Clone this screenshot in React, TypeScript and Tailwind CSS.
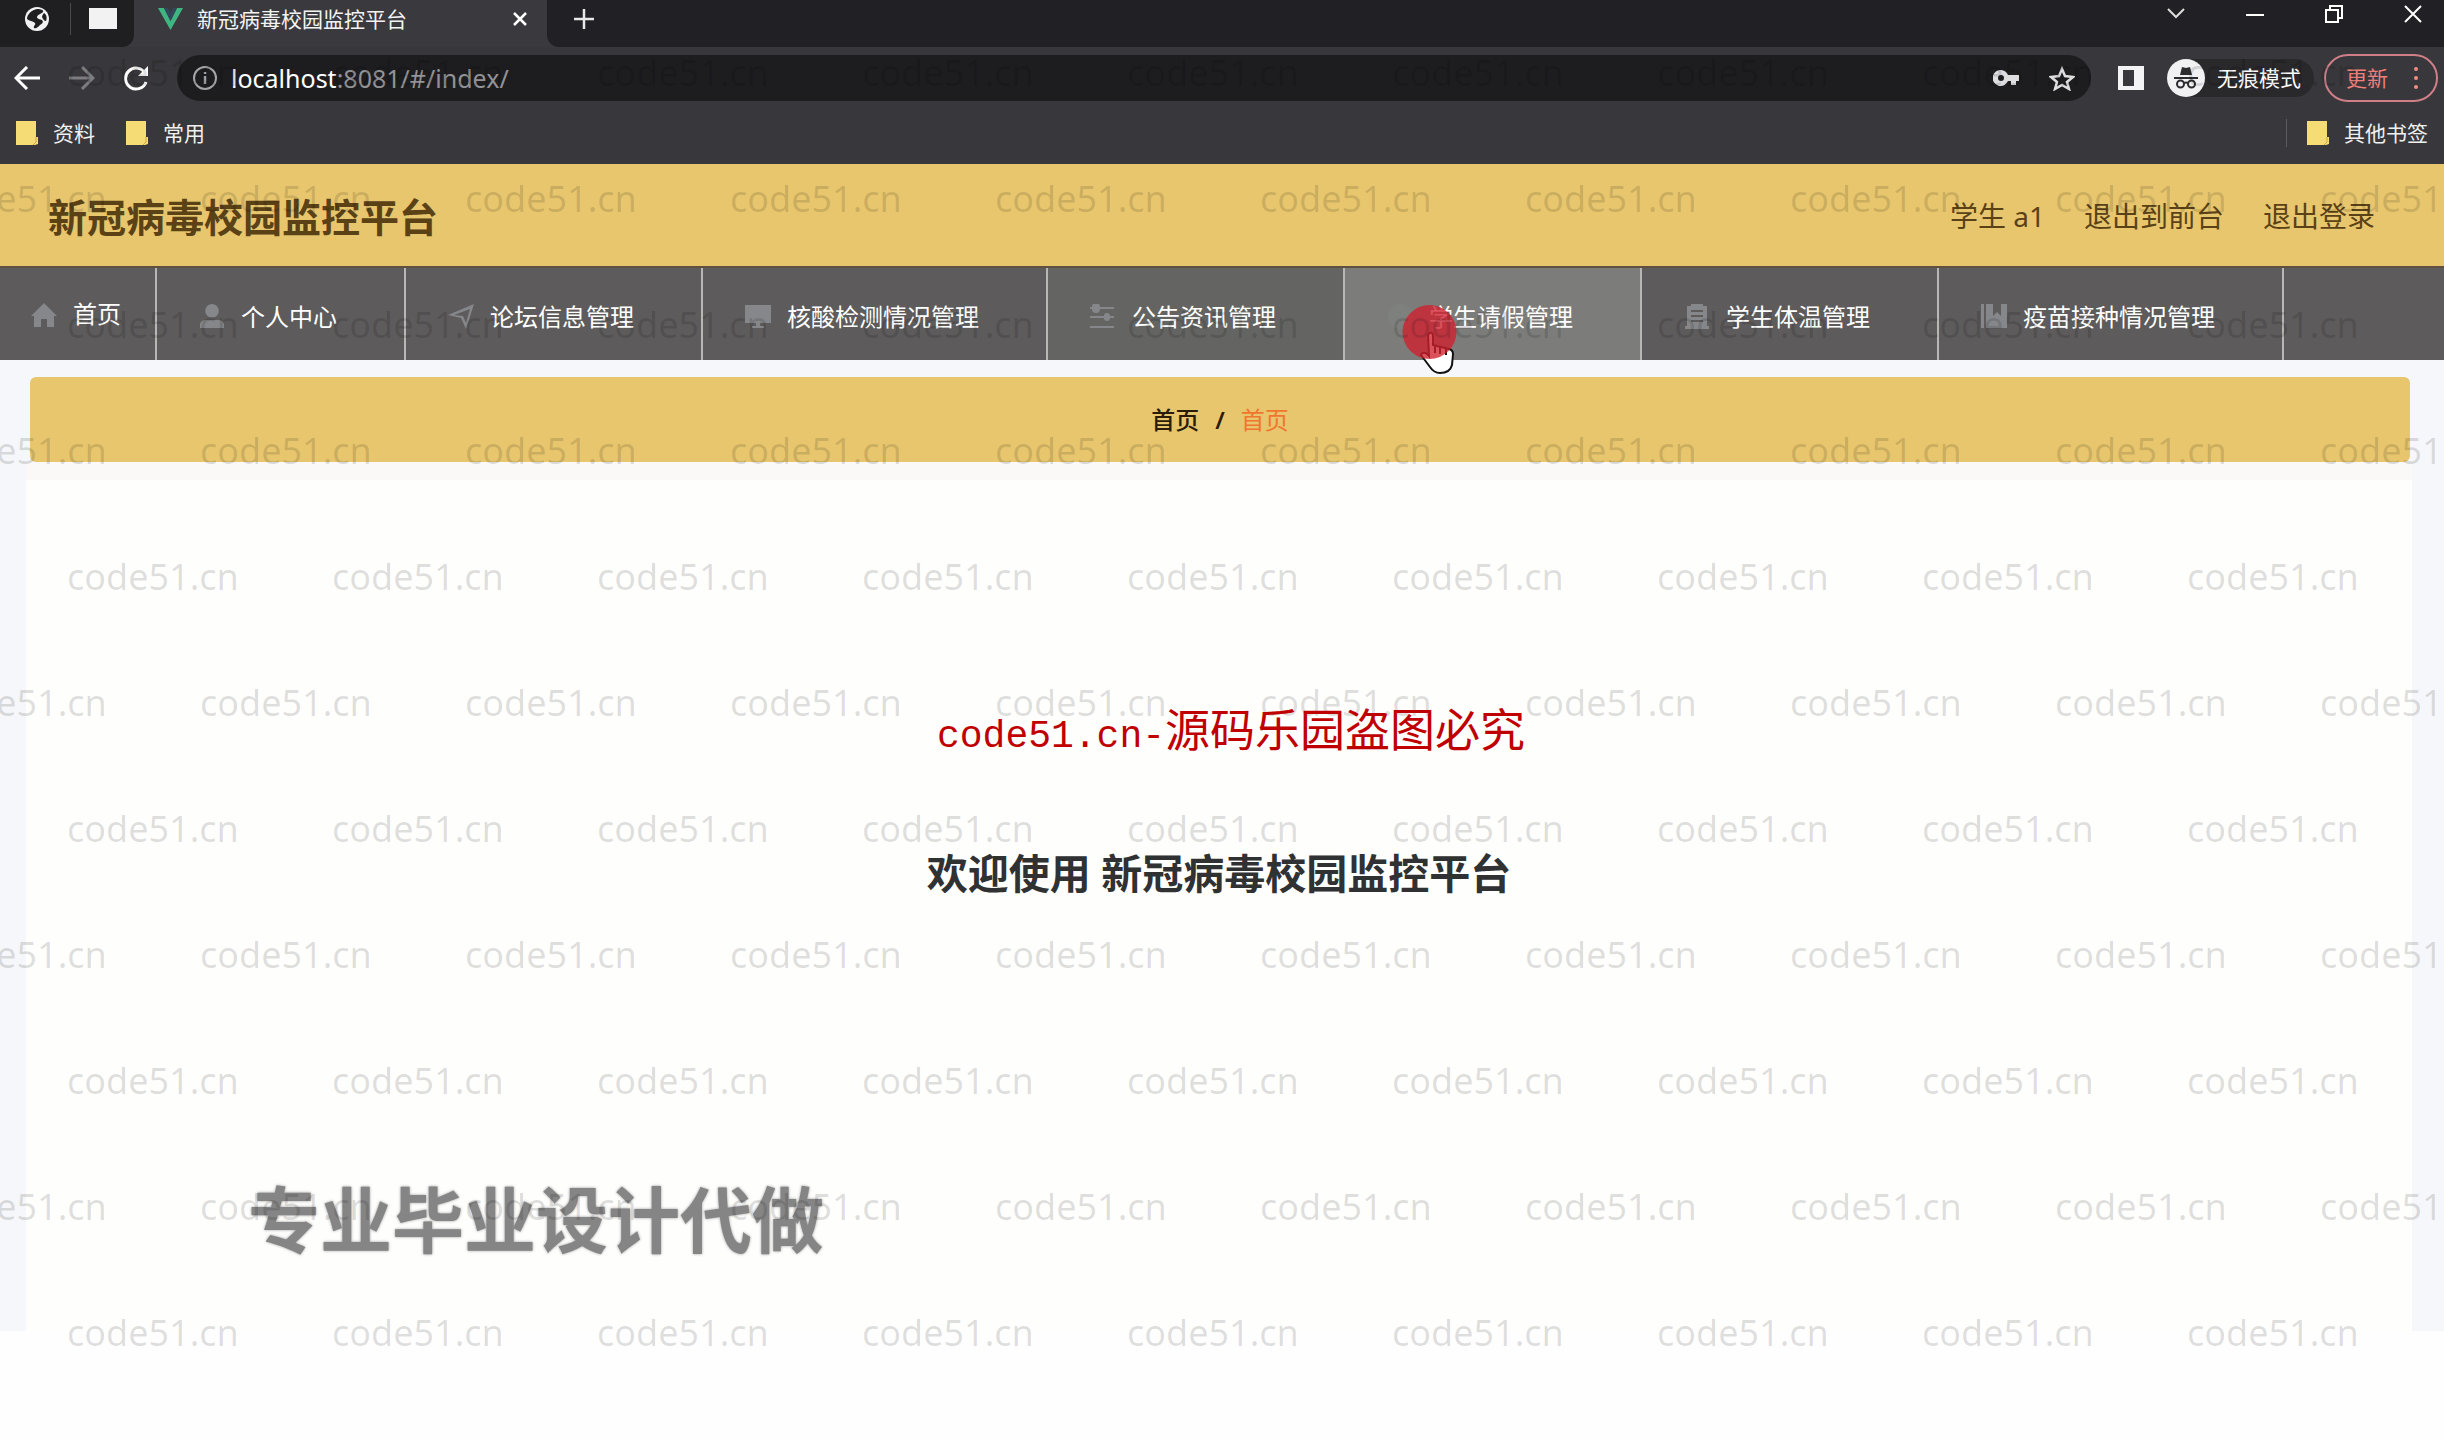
import type { ReactNode } from 'react';

const YELLOW = 'bg-[#e7c66d]';

function Folder() {
  return (
    <svg viewBox="0 0 22 26" className="h-[26px] w-[22px] shrink-0" aria-hidden="true">
      <path d="M0 1h20v16h2v7l-3 1H0z" fill="#f6dc74" />
      <path d="M20 17v5l-3 3" fill="none" stroke="#c9a640" strokeWidth="1" />
    </svg>
  );
}

function TabStrip() {
  return (
    <div className="flex h-[47px] items-stretch bg-[#3a393e]">
      <div className="flex w-[134px] items-center rounded-br-xl bg-[#1f1f21] pb-[10px]">
        <button aria-label="浏览器" className="ml-6">
          <svg viewBox="0 0 26 26" className="h-[26px] w-[26px]">
            <circle cx="13" cy="13" r="12" fill="#f1f1f1" />
            <path d="M13 3c4 0 7 1 6 3-2 2-5 2-6 5 0 2 3 2 5 3 2 2 0 4-2 5-2 2-4 4-6 3-1-2 2-3 1-5-2-2-6-2-8-4 0-5 5-9 10-10z" fill="#1f1f21" />
            <path d="M20 7c3 2 3 5 2 8-2 0-3-2-4-4 0-1 1-3 2-4z" fill="#1f1f21" />
          </svg>
        </button>
        <span className="ml-5 h-8 w-px bg-[#4a4a4d]" />
        <button aria-label="标签页" className="ml-[18px] h-[21px] w-7 bg-[#f2f2f2]" />
      </div>
      <div className="flex w-[413px] items-center pb-[10px] pl-6 pr-5 text-[#f3f3f3]">
        <svg viewBox="0 0 25 24" className="h-6 w-[25px]" aria-hidden="true">
          <path d="M0 1h6l6.500 13L19 1h6L12.500 23z" fill="#3fb582" />
          <path d="M6 1h4l2.500 5L15 1h4l-6.500 13z" fill="#33475b" />
        </svg>
        <span className="ml-[14px] text-[21px] leading-7">新冠病毒校园监控平台</span>
        <button aria-label="关闭标签页" className="ml-auto">
          <svg viewBox="0 0 14 14" className="h-[14px] w-[14px]" fill="none" stroke="#fff" strokeWidth="2.500">
            <path d="M1 1l12 12M13 1L1 13" />
          </svg>
        </button>
      </div>
      <div className="flex flex-1 items-center rounded-bl-xl bg-[#212024] pb-[10px] pl-[27px]">
        <button aria-label="新标签页">
          <svg viewBox="0 0 20 20" className="h-5 w-5" fill="none" stroke="#e8e8e8" strokeWidth="2.500">
            <path d="M10 0v20M0 10h20" />
          </svg>
        </button>
        <div className="ml-auto flex items-center gap-[61px] pb-[10px] pr-[22px] text-white">
          <button aria-label="搜索标签页">
            <svg viewBox="0 0 18 11" className="h-[11px] w-[18px]" fill="none" stroke="#ddd" strokeWidth="2"><path d="M1 1l8 8 8-8" /></svg>
          </button>
          <button aria-label="最小化">
            <svg viewBox="0 0 18 18" className="h-[18px] w-[18px]" fill="none" stroke="#fff" strokeWidth="2"><path d="M0 10h18" /></svg>
          </button>
          <button aria-label="还原">
            <svg viewBox="0 0 18 18" className="h-[18px] w-[18px]" fill="none" stroke="#fff" strokeWidth="2"><path d="M1 5h12v12H1zM5 5V1h12v12h-4" /></svg>
          </button>
          <button aria-label="关闭">
            <svg viewBox="0 0 18 18" className="h-[18px] w-[18px]" fill="none" stroke="#fff" strokeWidth="2"><path d="M1 1l16 16M17 1L1 17" /></svg>
          </button>
        </div>
      </div>
    </div>
  );
}

function Toolbar() {
  return (
    <div className="flex h-[62px] items-center pl-[14px] pr-[6px]">
      <div className="flex items-center gap-[29px]">
        <button aria-label="后退">
          <svg viewBox="0 0 26 24" className="h-6 w-[26px]" fill="none" stroke="#fff" strokeWidth="3"><path d="M26 12H3M13 1L2 12l11 11" /></svg>
        </button>
        <button aria-label="前进">
          <svg viewBox="0 0 26 24" className="h-6 w-[26px]" fill="none" stroke="#7d7d80" strokeWidth="3"><path d="M0 12h23M13 1l11 11-11 11" /></svg>
        </button>
        <button aria-label="重新加载">
          <svg viewBox="0 0 26 26" className="h-[26px] w-[26px]" fill="none" stroke="#fff" strokeWidth="3"><path d="M22 17a10.500 10.500 0 1 1-1-9" /><path d="M24 1v10H14z" fill="#fff" stroke="none" /></svg>
        </button>
      </div>
      <div className="ml-[27px] flex h-[46px] flex-1 items-center rounded-full bg-[#1d1d20] pl-4 pr-4">
        <svg viewBox="0 0 24 24" className="h-6 w-6 shrink-0" fill="none" stroke="#a5a5a8" strokeWidth="2" aria-hidden="true">
          <circle cx="12" cy="12" r="11" /><path d="M12 10v8M12 6v2" strokeWidth="2.500" />
        </svg>
        <div className="ml-[14px] text-[25px] leading-8">
          <span className="text-white">localhost</span>
          <span className="text-[#939396]">:8081/#/index/</span>
        </div>
        <button aria-label="密码" className="ml-auto">
          <svg viewBox="0 0 26 16" className="h-4 w-[26px]" fill="#dedee0"><path fillRule="evenodd" d="M8 0a8 8 0 0 1 7 5h11v6h-3v4h-5v-4h-3A8 8 0 1 1 8 0zM8 5a3 3 0 1 0 0 6 3 3 0 0 0 0-6z" /></svg>
        </button>
        <button aria-label="收藏" className="ml-[30px]">
          <svg viewBox="0 0 26 25" className="h-[25px] w-[26px]" fill="none" stroke="#dedee0" strokeWidth="2.500"><path d="M13 3l3 7 8 1-6 5 2 7-7-4-7 4 2-7-6-5 8-1z" /></svg>
        </button>
      </div>
      <button aria-label="侧边栏" className="ml-[27px]">
        <svg viewBox="0 0 26 24" className="h-6 w-[26px]"><path fillRule="evenodd" d="M0 0h26v24H0zM5 4v16h11V4z" fill="#f3f3f5" /></svg>
      </button>
      <div className="ml-[23px] flex h-[38px] items-center rounded-full bg-[#29292c] pr-[13px] text-white">
        <svg viewBox="0 0 38 38" className="h-[38px] w-[38px]" aria-hidden="true">
          <circle cx="19" cy="19" r="19" fill="#f1f1f4" />
          <path d="M13 16l2-8 4 1 4-1 2 8zM7 18h24v2H7z" fill="#2c2c30" />
          <g fill="none" stroke="#2c2c30" strokeWidth="2"><circle cx="13.500" cy="25" r="3.500" /><circle cx="24.500" cy="25" r="3.500" /><path d="M17 24q2-1 4 0" /></g>
        </svg>
        <span className="ml-3 text-[21px] leading-8">无痕模式</span>
      </div>
      <button className="ml-[10px] flex h-12 items-center rounded-full border-2 border-[#d07f88] pl-5 pr-[18px] text-[21px] leading-8 text-[#ee7f7a]">
        更新
        <svg viewBox="0 0 4 24" className="ml-[26px] h-6 w-1" fill="#f28b82"><circle cx="2" cy="3" r="2" /><circle cx="2" cy="12" r="2" /><circle cx="2" cy="21" r="2" /></svg>
      </button>
    </div>
  );
}

function Bookmarks() {
  return (
    <div className="flex h-[55px] items-center pb-2 pl-4 pr-4 text-[21px] leading-8 text-[#f0f0f0]">
      <a href="#a" className="flex items-center gap-[15px]"><Folder />资料</a>
      <a href="#b" className="ml-[31px] flex items-center gap-[15px]"><Folder />常用</a>
      <span className="ml-auto h-7 w-px bg-[#5c5c60]" />
      <a href="#c" className="ml-5 flex items-center gap-[15px]"><Folder />其他书签</a>
    </div>
  );
}

const icons: Record<string, ReactNode> = {
  home: <path d="M13 1L0 14h3v11h7v-8h6v8h7V14h3z" />,
  user: <path d="M13 0a7 7 0 0 1 4 12.500c-1 1-7 1-8 0A7 7 0 0 1 13 0zM1 24v-4q1-4 6-4h12q5 0 6 4v4z" />,
  send: <path fillRule="evenodd" d="M0 11L26 0l-8 25-5-11zM6 11l9 1 3 7 4-14z" />,
  screen: <path d="M0 1h26v18H15v3h4v2H7v-2h4v-3H0z" />,
  sliders: <path d="M0 3h2a4 4 0 0 1 8 0h14v2H10a4 4 0 0 1-8 0H0zM0 12h14a3 3 0 0 1 6 0h4v2h-4a3 3 0 0 1-6 0H0zM0 22h24v2H0z" />,
  bag: <path d="M13 0a12 12 0 1 0 0 25 12 12 0 0 0 0-25z" />,
  clip: <path fillRule="evenodd" d="M3 2h4V0h12v2h4v20h2v3H1v-3h2zM7 6v2h12V6zm0 5v2h12v-2zm0 5v2h12v-2z" />,
  book: <path d="M0 0h3v24H0zM5 0h7v12l4-4 4 4V0h6v24H5z" />,
};

const items = [
  { icon: 'user', label: '个人中心' },
  { icon: 'send', label: '论坛信息管理' },
  { icon: 'screen', label: '核酸检测情况管理' },
  { icon: 'sliders', label: '公告资讯管理', tone: 'bg-[#646563]' },
  { icon: 'bag', label: '学生请假管理', tone: 'bg-[#7c7d7a]', hover: true },
  { icon: 'clip', label: '学生体温管理' },
  { icon: 'book', label: '疫苗接种情况管理' },
];

function NavIcon({ name, faint }: { name: string; faint?: boolean }) {
  return (
    <svg viewBox="0 0 26 25" className={'h-[25px] w-[26px] shrink-0 ' + (faint ? 'opacity-30' : '')} fill="#85878a" aria-hidden="true">
      {icons[name]}
    </svg>
  );
}

function Pointer() {
  return (
    <div className="pointer-events-none absolute left-[57px] top-[37px] z-10">
      <svg viewBox="0 0 56 70" className="h-[70px] w-14" aria-hidden="true">
        <path d="M26 30q3-5 5 0v10l16 4q4 1 4 5l-1 11q-2 8-12 8-6 0-10-6l-9-12q2-4 6-1l2 2z" fill="#fff" stroke="#111" strokeWidth="2" />
        <path d="M33 40v8M38 41v8M44 43v7" stroke="#111" strokeWidth="2" />
        <circle cx="27.500" cy="27" r="27" fill="#d0202e" fillOpacity=".78" />
      </svg>
    </div>
  );
}

function Nav() {
  return (
    <nav className="flex h-[94px] border-t-2 border-[#60503f] bg-[#5d5b5b] text-2xl leading-8 text-white">
      <a href="#home" className="flex w-[157px] shrink-0 items-center gap-4 border-r-2 border-[#b9b7b6] pl-[31px]">
        <NavIcon name="home" />首页
      </a>
      {items.map((it) => (
        <a key={it.label} href={'#' + it.icon} className={'relative flex shrink-0 items-center gap-4 border-r-2 border-[#b9b7b6] pl-[42px] pr-[67px] pt-1 ' + (it.tone ?? '')}>
          <NavIcon name={it.icon} faint={it.hover} />
          <span className="pt-[2px]">{it.label}</span>
          {it.hover && <Pointer />}
        </a>
      ))}
    </nav>
  );
}

function Watermarks() {
  return (
    <div aria-hidden="true" className="pointer-events-none absolute inset-0 z-20 overflow-hidden">
      <div className="flex flex-col pt-[10px] text-4xl font-normal text-black/[0.13]">
        {Array.from({ length: 11 }, (_, r) => (
          <div key={r} className={'flex h-[126px] items-center ' + (r % 2 ? '-ml-[65px]' : 'ml-[67px]')}>
            {Array.from({ length: 10 }, (_, c) => <span key={c} className="w-[265px] shrink-0">code51.cn</span>)}
          </div>
        ))}
      </div>
    </div>
  );
}

export default function App() {
  return (
    <div className="relative flex min-h-screen flex-col overflow-hidden bg-[#fefefe] font-['Noto_Sans','Noto_Sans_CJK_SC',sans-serif]">
      <header className="bg-[#38373b]">
        <TabStrip />
        <Toolbar />
        <Bookmarks />
      </header>

      <div className={'flex h-[102px] items-center justify-between pl-12 pr-[69px] text-[#5a4216] ' + YELLOW}>
        <h1 className="pt-1 text-[39px] font-semibold leading-[48px]">新冠病毒校园监控平台</h1>
        <div className="flex items-center gap-[39px] pt-[2px] text-[28px] leading-9">
          <span>学生 a1</span>
          <a href="#front">退出到前台</a>
          <a href="#logout">退出登录</a>
        </div>
      </div>
      <Nav />

      <main className="flex min-h-[971px] flex-col bg-[#f6f7fa] pt-[17px]">
        <div className={'ml-[30px] mr-[34px] flex h-[85px] shrink-0 items-center justify-center gap-4 rounded-md text-2xl leading-8 ' + YELLOW}>
          <a href="#home" className="font-medium text-[#2a1c08]">首页</a>
          <span className="font-semibold text-[#2a1c08]">/</span>
          <span className="text-[#f0762f]">首页</span>
        </div>
        <section className="ml-[26px] mr-8 flex flex-1 flex-col border-t-[18px] border-[#faf9f8] bg-[#fefefd] pt-[363px]">
          <h2 className="text-center text-[41px] font-bold leading-[60px] text-[#303133]">欢迎使用 新冠病毒校园监控平台</h2>
        </section>
      </main>

      <Watermarks />
      <p className="pointer-events-none absolute inset-x-0 top-[700px] z-30 flex items-baseline justify-center pl-[18px] leading-[60px] text-[#c00000]">
        <span className="font-['Liberation_Mono',monospace] text-[38px]">code51.cn-</span>
        <span className="text-[45px]">源码乐园盗图必究</span>
      </p>
      <p className="pointer-events-none absolute left-[248px] top-[1169px] z-10 text-[72px] font-bold leading-[100px] text-[#858585] [text-shadow:0_0_3px_#999,0_0_2px_#fff]">专业毕业设计代做</p>
    </div>
  );
}
